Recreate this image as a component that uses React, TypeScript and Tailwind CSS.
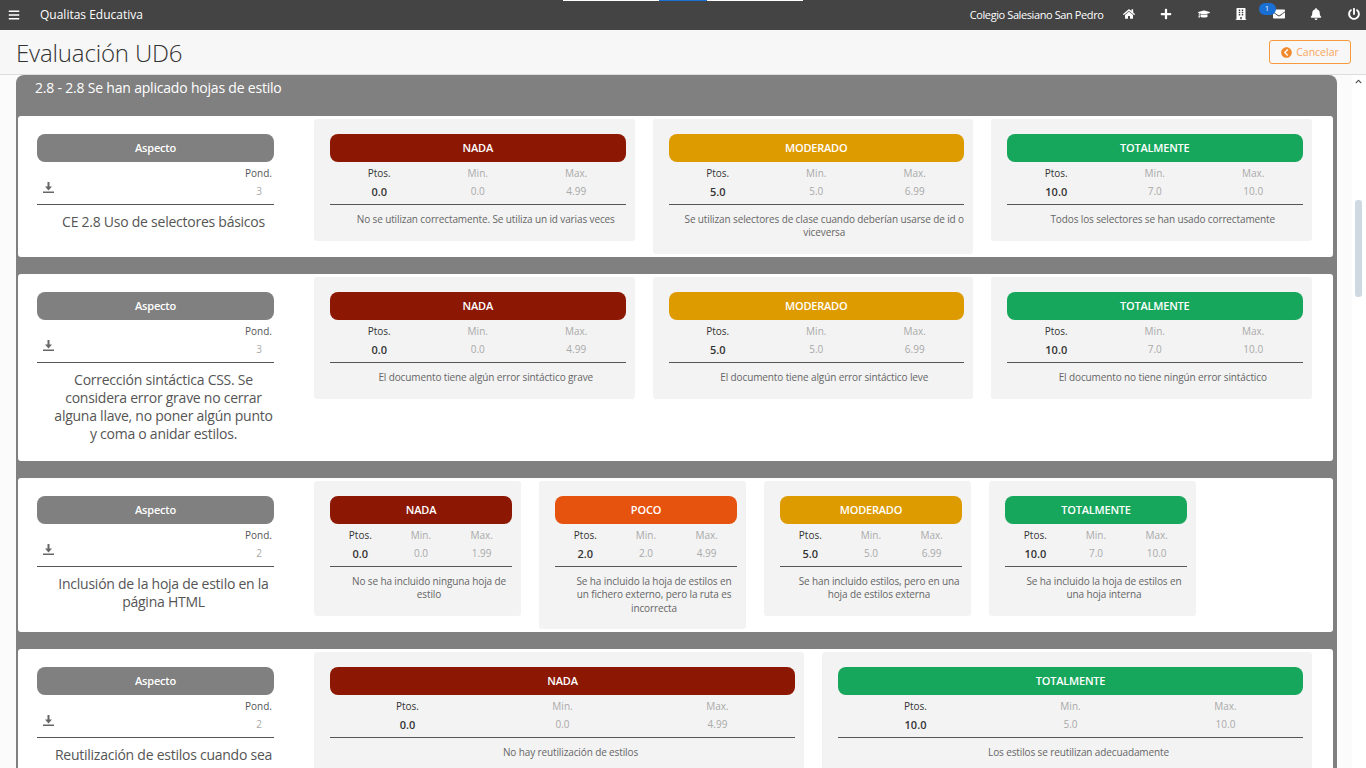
import { FaBars, FaBell, FaBuilding, FaChevronCircleLeft, FaEnvelope, FaGraduationCap, FaHome, FaPlus, FaPowerOff, FaChevronUp } from "react-icons/fa";

type Level = { name: string; color: string; pts: string; min: string; max: string; desc: string };

const NADA = "bg-[#8c1703]";
const POCO = "bg-[#e6530f]";
const MOD = "bg-[#de9b00]";
const TOT = "bg-[#16a75c]";

const rows: { pond: string; title: string; width: string; levels: Level[] }[] = [
  {
    pond: "3",
    title: "CE 2.8 Uso de selectores básicos",
    width: "w-[320.5px]",
    levels: [
      { name: "NADA", color: NADA, pts: "0.0", min: "0.0", max: "4.99", desc: "No se utilizan correctamente. Se utiliza un id varias veces" },
      { name: "MODERADO", color: MOD, pts: "5.0", min: "5.0", max: "6.99", desc: "Se utilizan selectores de clase cuando deberían usarse de id o viceversa" },
      { name: "TOTALMENTE", color: TOT, pts: "10.0", min: "7.0", max: "10.0", desc: "Todos los selectores se han usado correctamente" },
    ],
  },
  {
    pond: "3",
    title: "Corrección sintáctica CSS. Se considera error grave no cerrar alguna llave, no poner algún punto y coma o anidar estilos.",
    width: "w-[320.5px]",
    levels: [
      { name: "NADA", color: NADA, pts: "0.0", min: "0.0", max: "4.99", desc: "El documento tiene algún error sintáctico grave" },
      { name: "MODERADO", color: MOD, pts: "5.0", min: "5.0", max: "6.99", desc: "El documento tiene algún error sintáctico leve" },
      { name: "TOTALMENTE", color: TOT, pts: "10.0", min: "7.0", max: "10.0", desc: "El documento no tiene ningún error sintáctico" },
    ],
  },
  {
    pond: "2",
    title: "Inclusión de la hoja de estilo en la página HTML",
    width: "w-[207px]",
    levels: [
      { name: "NADA", color: NADA, pts: "0.0", min: "0.0", max: "1.99", desc: "No se ha incluido ninguna hoja de estilo" },
      { name: "POCO", color: POCO, pts: "2.0", min: "2.0", max: "4.99", desc: "Se ha incluido la hoja de estilos en un fichero externo, pero la ruta es incorrecta" },
      { name: "MODERADO", color: MOD, pts: "5.0", min: "5.0", max: "6.99", desc: "Se han incluido estilos, pero en una hoja de estilos externa" },
      { name: "TOTALMENTE", color: TOT, pts: "10.0", min: "7.0", max: "10.0", desc: "Se ha incluido la hoja de estilos en una hoja interna" },
    ],
  },
  {
    pond: "2",
    title: "Reutilización de estilos cuando sea necesario",
    width: "w-[490px]",
    levels: [
      { name: "NADA", color: NADA, pts: "0.0", min: "0.0", max: "4.99", desc: "No hay reutilización de estilos" },
      { name: "TOTALMENTE", color: TOT, pts: "10.0", min: "5.0", max: "10.0", desc: "Los estilos se reutilizan adecuadamente" },
    ],
  },
];

function DownloadIcon() {
  return (
    <svg width="11" height="11" viewBox="0 0 11 11" fill="#666" className="mb-[5px]">
      <path d="M4.500 0h2v4.500h2.500L5.500 8.500 2 4.500h2.500z" />
      <rect x="0" y="9.500" width="11" height="1.500" />
    </svg>
  );
}

function LevelCard({ level, width }: { level: Level; width: string }) {
  return (
    <div className={`${width} shrink-0 self-start rounded-[3px] bg-[#f3f3f3] pt-[15px] pr-[9px] pb-[14.4px] pl-4`}>
      <div className={`${level.color} flex h-7 items-center justify-center rounded-lg text-[11px] font-semibold tracking-[-0.2px] text-white`}>{level.name}</div>
      <div className="mt-[5px] grid grid-cols-3 border-b border-[#555] pb-[6px] text-center text-[10px] leading-[13px]">
        <span className="font-medium text-[#333]">Ptos.</span>
        <span className="text-[#aaa]">Min.</span>
        <span className="text-[#aaa]">Max.</span>
        <span className="mt-[5px] text-[11px] font-semibold text-[#333]">{level.pts}</span>
        <span className="mt-[5px] text-[#a9a9a9]">{level.min}</span>
        <span className="mt-[5px] text-[#a9a9a9]">{level.max}</span>
      </div>
      <p className="mt-2 pl-4 text-center text-[10px] leading-[13.3px] tracking-[-0.12px] text-[#666]">{level.desc}</p>
    </div>
  );
}

function CriterionRow({ row }: { row: (typeof rows)[number] }) {
  return (
    <div className="mb-[17px] flex rounded-[3px] bg-white pt-[3px] pr-[21px] pb-[3px] pl-[19px]">
      <div className="mt-[15px] mb-[15px] mr-10 w-[237px] shrink-0">
        <div className="flex h-7 items-center justify-center rounded-lg bg-[#808080] text-[11px] font-semibold tracking-[-0.2px] text-white">Aspecto</div>
        <div className="mt-[5px] flex items-end justify-between border-b border-[#555] pb-[6px] pl-[6px] pr-[2px]">
          <DownloadIcon />
          <div className="text-right text-[10px] leading-[13px]">
            <div className="font-medium text-[#555]">Pond.</div>
            <div className="mt-[5px] pr-[10px] text-[#aaa]">{row.pond}</div>
          </div>
        </div>
        <p className="mt-2 pl-4 text-center text-sm leading-[18px] tracking-[-0.25px] text-[#555]">{row.title}</p>
      </div>
      <div className="flex gap-[18px]">
        {row.levels.map((l) => (
          <LevelCard key={l.name} level={l} width={row.width} />
        ))}
      </div>
    </div>
  );
}

export default function App() {
  return (
    <div className="flex h-screen flex-col overflow-hidden bg-[#fbfbfb] font-['Open_Sans',sans-serif]">
      {/* Top bar */}
      <header className="relative flex h-[30px] shrink-0 items-center bg-[#444] pr-[6.5px] pl-2 text-white">
        <div className="absolute top-0 left-[563px] flex h-px">
          <span className="w-24 bg-white" />
          <span className="w-12 bg-[#1a6fd4]" />
          <span className="w-24 bg-white" />
        </div>
        <FaBars className="text-[12px]" />
        <span className="ml-5 text-xs">Qualitas Educativa</span>
        <span className="ml-auto text-[11px] tracking-[-0.4px]">Colegio Salesiano San Pedro</span>
        <div className="-mt-[2px] ml-[19px] flex items-center gap-[25.5px] text-[12px]">
          <FaHome className="block" />
          <FaPlus className="block" />
          <FaGraduationCap className="block" />
          <FaBuilding className="block" />
          <div className="relative">
            <FaEnvelope className="block" />
            <span className="absolute -top-[5px] -left-[14px] flex h-[12px] w-[17px] items-center justify-center rounded-full bg-[#1a6fd4] text-[7px]">1</span>
          </div>
          <FaBell className="block" />
          <FaPowerOff className="block" />
        </div>
      </header>

      {/* Title */}
      <div className="flex h-[45px] shrink-0 items-center border-b border-[#ddd] bg-[#f7f7f7] pl-4 pr-[15px]">
        <h1 className="pt-[1px] text-2xl font-light tracking-[-0.15px] text-[#333]">Evaluación UD6</h1>
        <button className="ml-auto flex h-6 w-[82px] items-center justify-center gap-[4px] rounded-[3px] border border-[#f79a3e] pt-px text-[10.5px] text-[#f9a660]">
          <FaChevronCircleLeft className="text-[11px] text-[#f28a2b]" />
          Cancelar
        </button>
      </div>

      {/* Content */}
      <div className="relative min-h-0 flex-1 overflow-hidden pr-[29px] pl-4">
        <section className="rounded-t-lg bg-[#808080] pr-[4px] pl-[2px]">
          <h2 className="pt-[4px] pl-[17px] text-sm leading-[18px] font-medium tracking-[-0.2px] text-white">2.8 - 2.8 Se han aplicado hojas de estilo</h2>
          <div className="mt-[19px]">
            {rows.map((r) => (
              <CriterionRow key={r.title} row={r} />
            ))}
          </div>
        </section>

        {/* Scrollbar */}
        <div className="absolute top-0 right-0 bottom-0 w-[14px] bg-white" />
        <FaChevronUp className="absolute top-[3px] right-[4px] text-[7px] text-[#444]" />
        <div className="absolute top-[125px] right-[4px] h-[97px] w-[7px] rounded-[3px] bg-[#cfd9e1]" />
      </div>
    </div>
  );
}
